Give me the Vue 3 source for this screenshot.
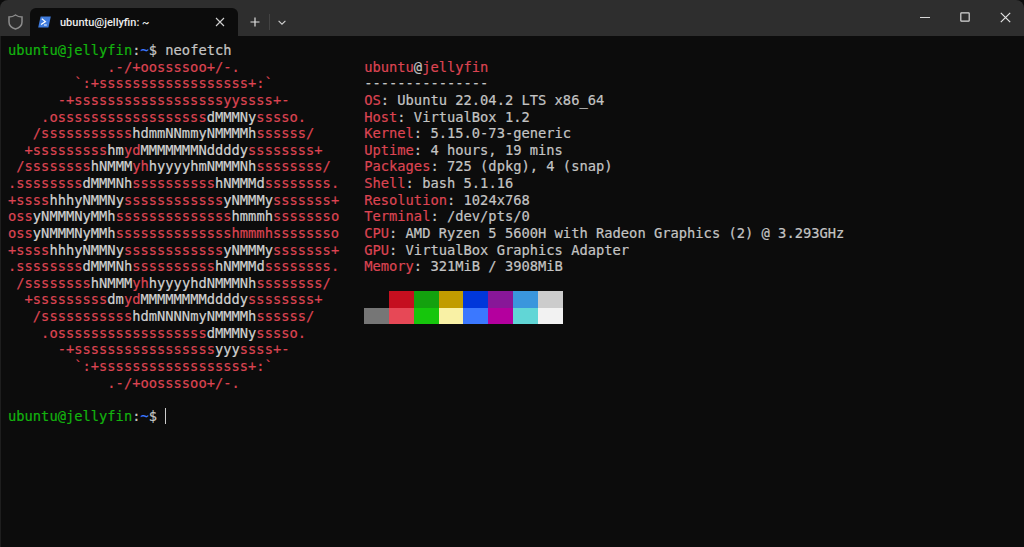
<script setup>
const logo = [
  '            .-/+oossssoo+/-.',
  '        `:+ssssssssssssssssss+:`',
  '      -+ssssssssssssssssssyyssss+-',
  '    .ossssssssssssssssss|dMMMNy|sssso.',
  '   /sssssssssss|hdmmNNmmyNMMMMh|ssssss/',
  '  +sssssssss|hm|yd|MMMMMMMNddddy|ssssssss+',
  ' /ssssssss|hNMMM|yh|hyyyyhmNMMMNh|ssssssss/',
  '.ssssssss|dMMMNh|ssssssssss|hNMMMd|ssssssss.',
  '+ssss|hhhyNMMNy|ssssssssssss|yNMMMy|sssssss+',
  'oss|yNMMMNyMMh|ssssssssssssss|hmmmh|ssssssso',
  'oss|yNMMMNyMMh|sssssssssssssshmmmhssssssso',
  '+ssss|hhhyNMMNy|ssssssssssss|yNMMMy|sssssss+',
  '.ssssssss|dMMMNh|ssssssssss|hNMMMd|ssssssss.',
  ' /ssssssss|hNMMM|yh|hyyyyhdNMMMNh|ssssssss/',
  '  +sssssssss|dm|yd|MMMMMMMMddddy|ssssssss+',
  '   /sssssssssss|hdmNNNNmyNMMMMh|ssssss/',
  '    .ossssssssssssssssss|dMMMNy|sssso.',
  '      -+sssssssssssssssss|yyy|ssss+-',
  '        `:+ssssssssssssssssss+:`',
  '            .-/+oossssoo+/-.',
].map((line) => line.split('|'))

const info = [
  ['OS', 'Ubuntu 22.04.2 LTS x86_64'],
  ['Host', 'VirtualBox 1.2'],
  ['Kernel', '5.15.0-73-generic'],
  ['Uptime', '4 hours, 19 mins'],
  ['Packages', '725 (dpkg), 4 (snap)'],
  ['Shell', 'bash 5.1.16'],
  ['Resolution', '1024x768'],
  ['Terminal', '/dev/pts/0'],
  ['CPU', 'AMD Ryzen 5 5600H with Radeon Graphics (2) @ 3.293GHz'],
  ['GPU', 'VirtualBox Graphics Adapter'],
  ['Memory', '321MiB / 3908MiB'],
]

const palette = [
  ['#0c0c0c', '#c50f1f', '#13a10e', '#c19c00', '#0037da', '#881798', '#3a96dd', '#cccccc'],
  ['#767676', '#e74856', '#16c60c', '#f9f1a5', '#3b78ff', '#b4009e', '#61d6d6', '#f2f2f2'],
]
</script>

<template>
  <div class="window">
    <header class="titlebar">
      <div class="shield">
        <svg width="15" height="16" viewBox="0 0 15 16" fill="none" stroke="#8c8c8c" stroke-width="1.5">
          <path d="M7.5 1 C9.5 2.4 11.6 3 14 3 V8 C14 11.6 11.2 13.9 7.5 15 C3.8 13.9 1 11.6 1 8 V3 C3.4 3 5.5 2.4 7.5 1 Z" />
        </svg>
      </div>
      <div class="tab">
        <svg class="ps" width="13" height="12" viewBox="0 0 13 12">
          <path d="M2.6 0.4 H12.8 L10.4 11.6 H0.2 Z" fill="#3f7bdc" />
          <path d="M3.8 2.8 L7.4 5.6 L3 8.6" fill="none" stroke="#fff" stroke-width="1.2" />
          <path d="M6 9 H8.8" stroke="#fff" stroke-width="1" />
        </svg>
        <span class="tab-title">ubuntu@jellyfin: ~</span>
        <svg class="tab-close" width="10" height="10" viewBox="0 0 10 10" stroke="#d0d0d0" stroke-width="1.1">
          <path d="M1 1 L9 9 M9 1 L1 9" />
        </svg>
      </div>
      <div class="new-tab">
        <svg width="10" height="10" viewBox="0 0 10 10" stroke="#e0e0e0" stroke-width="1.2">
          <path d="M5 0.5 V9.5 M0.5 5 H9.5" />
        </svg>
      </div>
      <span class="divider"></span>
      <div class="drop">
        <svg width="8" height="5" viewBox="0 0 8 5" fill="none" stroke="#d0d0d0" stroke-width="1.1">
          <path d="M0.6 0.8 L4 4.2 L7.4 0.8" />
        </svg>
      </div>
      <div class="controls">
        <button class="ctl">
          <svg width="10" height="10" viewBox="0 0 10 10" stroke="#d8d8d8" stroke-width="1">
            <path d="M0 5.5 H10" />
          </svg>
        </button>
        <button class="ctl">
          <svg width="10" height="10" viewBox="0 0 10 10" fill="none" stroke="#d8d8d8" stroke-width="1.2">
            <rect x="0.8" y="0.8" width="8.4" height="8.4" rx="0.6" />
          </svg>
        </button>
        <button class="ctl">
          <svg width="11" height="11" viewBox="0 0 11 11" stroke="#e4e4e4" stroke-width="1.2">
            <path d="M0.8 0.8 L10.2 10.2 M10.2 0.8 L0.8 10.2" />
          </svg>
        </button>
      </div>
    </header>

    <main class="term">
      <div class="line">
        <span class="green">ubuntu@jellyfin</span><span class="gray">:</span><span class="blue">~</span><span class="gray">$ neofetch</span>
      </div>
      <div class="fetch">
        <div class="logo">
          <div v-for="(parts, i) in logo" :key="i" class="line">
            <span v-for="(part, j) in parts" :key="j" :class="j % 2 ? 'white' : 'red'">{{ part }}</span>
          </div>
        </div>
        <div class="info">
          <div class="line"><span class="red">ubuntu</span><span class="gray">@</span><span class="red">jellyfin</span></div>
          <div class="line gray">---------------</div>
          <div v-for="row in info" :key="row[0]" class="line">
            <span class="red">{{ row[0] }}</span><span class="gray">: {{ row[1] }}</span>
          </div>
          <div class="line">&nbsp;</div>
          <div v-for="(row, r) in palette" :key="r" class="swatches">
            <span v-for="c in row" :key="c" class="swatch" :style="{ background: c }"></span>
          </div>
        </div>
      </div>
      <div class="line">&nbsp;</div>
      <div class="line prompt">
        <span class="green">ubuntu@jellyfin</span><span class="gray">:</span><span class="blue">~</span><span class="gray">$ </span><span class="cursor"></span>
      </div>
    </main>
  </div>
</template>

<style>
html, body { margin: 0; background: #0c0c0c; }
</style>

<style scoped>
.window {
  width: 1024px;
  height: 547px;
  display: flex;
  flex-direction: column;
  background: #0c0c0c;
  overflow: hidden;
}
.titlebar {
  height: 36px;
  flex: none;
  display: flex;
  align-items: flex-end;
  background: #2e2e2e;
  border-radius: 8px 8px 0 0;
  box-sizing: border-box;
}
.shield {
  width: 30px;
  height: 28px;
  display: flex;
  align-items: center;
  justify-content: center;
}
.tab {
  width: 208px;
  height: 28px;
  box-sizing: border-box;
  padding: 0 9px 0 8px;
  display: flex;
  align-items: center;
  background: #0c0c0c;
  border-radius: 6px 6px 0 0;
}
.ps { margin-right: 9px; }
.tab-title {
  flex: 1;
  font: 500 11px "Roboto", "Noto Sans", sans-serif;
  color: #ececec;
}
.tab-close { margin-right: 4px; }
.new-tab {
  width: 31px;
  height: 28px;
  box-sizing: border-box;
  padding-left: 3px;
  display: flex;
  align-items: center;
  justify-content: center;
}
.divider {
  width: 1px;
  height: 16px;
  margin-bottom: 6px;
  background: #434343;
}
.drop {
  width: 24px;
  height: 28px;
  display: flex;
  align-items: center;
  justify-content: center;
}
.controls {
  margin-left: auto;
  margin-right: -1px;
  align-self: stretch;
  display: flex;
}
.ctl {
  width: 40px;
  padding: 0 0 2px;
  border: 0;
  background: transparent;
  display: flex;
  align-items: center;
  justify-content: center;
}
.term {
  flex: 1;
  padding: 6px 0 0 8px;
  font-family: "DejaVu Sans Mono", monospace;
  font-size: 13.75px;
  color: #cccccc;
  -webkit-text-stroke: 0.2px currentColor;
  box-shadow: inset 1px 0 0 #1e1e1e;
}
.line {
  height: 16.64px;
  line-height: 16.64px;
  white-space: pre;
}
.fetch { display: flex; }
.logo { width: 356.2px; flex: none; }
.swatches { display: flex; height: 16.5px; }
.swatch { width: 24.8px; }
.red { color: #dc4452; }
.white { color: #d2d2d2; }
.gray { color: #c4c4c4; }
.green { color: #13b30e; }
.blue { color: #3b78ff; }
.prompt { display: flex; align-items: center; }
.cursor {
  width: 1px;
  height: 16px;
  background: #cccccc;
}
</style>
